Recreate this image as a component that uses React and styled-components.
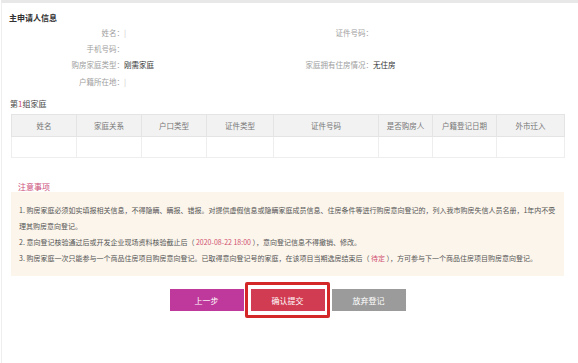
import React from "react";
import styled, { createGlobalStyle } from "styled-components";

const GlobalStyle = createGlobalStyle`
  body {
    margin: 0;
    background: #fff;
    font-family: "Noto Sans CJK SC", "Noto Sans", sans-serif;
  }
`;

const Page = styled.div`
  box-sizing: border-box;
  min-height: 363px;
  border-top: 3px solid #e8e8e8;
  border-left: 1px solid #eee;
  margin-left: 1px;
  padding: 0 14px 0 9px;
`;

const Title = styled.div`
  margin-top: 9px;
  margin-left: -2px;
  font-size: 8px;
  line-height: 12px;
  font-weight: bold;
  color: #333;
`;

const InfoGrid = styled.div`
  display: grid;
  grid-template-columns: 113px 125px 124px 1fr;
  grid-auto-rows: 16.3px;
  align-items: center;
  font-size: 7.5px;
`;

const Label = styled.div`
  text-align: right;
  color: #a0a0a0;
`;

const Value = styled.div`
  color: ${(p) => (p.faint ? "#c8c8c8" : "#333")};
`;

const GroupTitle = styled.div`
  margin-top: 9px;
  margin-left: -1px;
  font-size: 8px;
  line-height: 12px;
  color: #444;

  span {
    color: #d0506f;
  }
`;

const Table = styled.table`
  margin-top: 4px;
  width: 553px;
  border-collapse: collapse;
  table-layout: fixed;
  font-size: 7.5px;
`;

const Th = styled.th`
  height: 21px;
  padding: 0;
  background: #f2f2f2;
  border: 1px solid #e4e4e4;
  color: #777;
  font-weight: normal;
  text-align: center;
`;

const Td = styled.td`
  height: 20px;
  padding: 0;
  border: 1px solid #eee;
`;

const NoticeTitle = styled.div`
  margin-top: 24px;
  padding-left: 7px;
  font-size: 8px;
  line-height: 10px;
  color: #cc4f7a;
`;

const NoticeBox = styled.div`
  width: 553px;
  box-sizing: border-box;
  padding: 10px 8px 10px 8px;
  background: #fcf5ec;
  font-size: 7px;
  line-height: 16px;
  color: #555;

  p {
    margin: 0;
    white-space: nowrap;
  }
`;

const Red = styled.span`
  color: #d0506f;
`;

const ButtonRow = styled.div`
  width: 553px;
  margin-top: 13px;
  display: flex;
  justify-content: center;
  align-items: flex-start;
  gap: 7px;
`;

const ButtonWrap = styled.div`
  position: relative;
`;

const Button = styled.button`
  display: block;
  width: 74px;
  height: 22px;
  padding: 0;
  border: none;
  background: ${(p) => p.bg};
  color: #fff;
  font-family: inherit;
  font-size: 8px;
  cursor: pointer;
`;

const Highlight = styled.div`
  position: absolute;
  left: -6px;
  right: -5px;
  top: -7px;
  bottom: -7px;
  border: 3px solid #d42828;
  border-radius: 2px;
  pointer-events: none;
`;

const columns = [
  ["姓名", 65],
  ["家庭关系", 65],
  ["户口类型", 65],
  ["证件类型", 67],
  ["证件号码", 105],
  ["是否购房人", 54],
  ["户籍登记日期", 64],
  ["外市迁入", 68],
];

export default function App() {
  return (
    <>
      <GlobalStyle />
      <Page>
        <Title>主申请人信息</Title>
        <InfoGrid>
          <Label>姓名：</Label>
          <Value faint>|</Value>
          <Label>证件号码：</Label>
          <Value />
          <Label>手机号码：</Label>
          <Value />
          <Label />
          <Value />
          <Label>购房家庭类型：</Label>
          <Value>刚需家庭</Value>
          <Label>家庭拥有住房情况：</Label>
          <Value>无住房</Value>
          <Label>户籍所在地：</Label>
          <Value faint>|</Value>
          <Label />
          <Value />
        </InfoGrid>

        <GroupTitle>
          第<span>1</span>组家庭
        </GroupTitle>
        <Table>
          <colgroup>
            {columns.map(([name, w]) => (
              <col key={name} style={{ width: w }} />
            ))}
          </colgroup>
          <thead>
            <tr>
              {columns.map(([name]) => (
                <Th key={name}>{name}</Th>
              ))}
            </tr>
          </thead>
          <tbody>
            <tr>
              {columns.map(([name]) => (
                <Td key={name} />
              ))}
            </tr>
          </tbody>
        </Table>

        <NoticeTitle>注意事项</NoticeTitle>
        <NoticeBox>
          <p>
            1. 购房家庭必须如实填报相关信息，不得隐瞒、瞒报、错报。对提供虚假信息或隐瞒家庭成员信息、住房条件等进行购房意向登记的，列入我市购房失信人员名册，1年内不受
          </p>
          <p>理其购房意向登记。</p>
          <p>
            2. 意向登记核验通过后或开发企业现场资料核验截止后（ <Red>2020-08-22 18:00</Red> ），意向登记信息不得撤销、修改。
          </p>
          <p>
            3. 购房家庭一次只能参与一个商品住房项目购房意向登记。已取得意向登记号的家庭，在该项目当期选房结束后（ <Red>待定</Red> ），方可参与下一个商品住房项目购房意向登记。
          </p>
        </NoticeBox>

        <ButtonRow>
          <Button bg="#bf389c">上一步</Button>
          <ButtonWrap>
            <Button bg="#d23c52">确认提交</Button>
            <Highlight />
          </ButtonWrap>
          <Button bg="#9b9b9b">放弃登记</Button>
        </ButtonRow>
      </Page>
    </>
  );
}
